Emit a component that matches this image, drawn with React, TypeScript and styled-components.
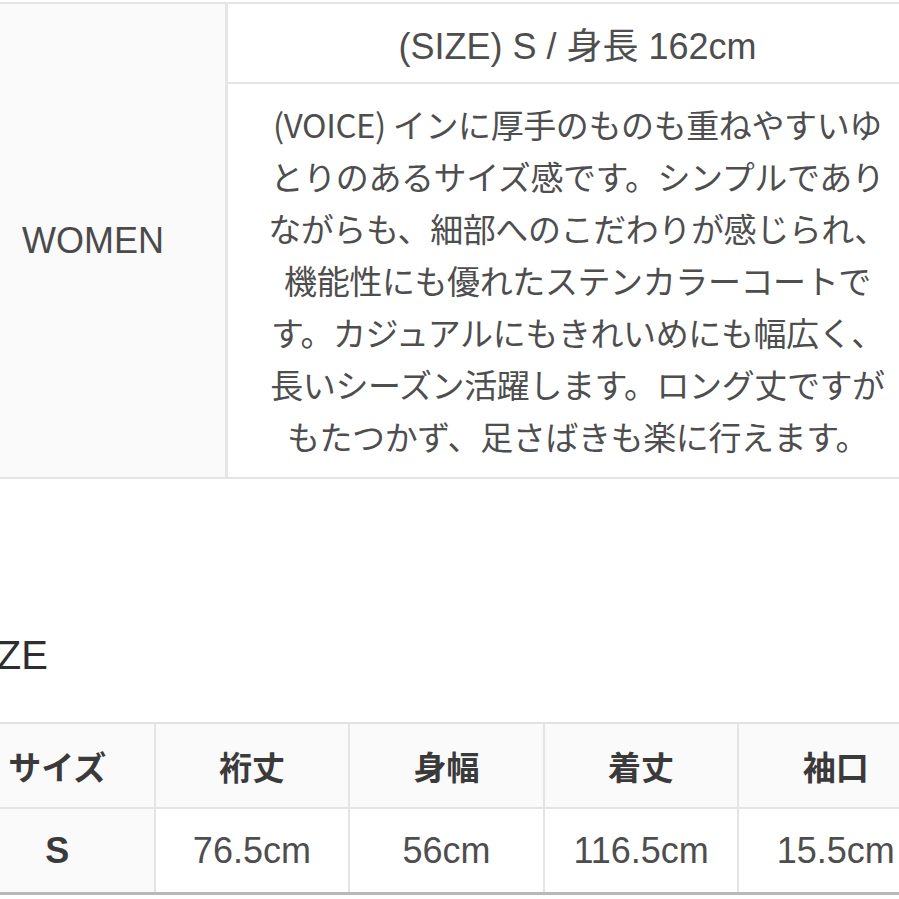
import React from 'react';
import styled, { createGlobalStyle } from 'styled-components';

const GlobalStyle = createGlobalStyle`
  html, body {
    margin: 0;
    padding: 0;
    background: #ffffff;
    overflow: hidden;
  }
  body {
    font-family: 'Liberation Sans', 'Noto Sans CJK JP', sans-serif;
    color: #4a4a4a;
  }
`;

const voiceLines = [
  '(VOICE) インに厚手のものも重ねやすいゆ',
  'とりのあるサイズ感です。シンプルであり',
  'ながらも、細部へのこだわりが感じられ、',
  '機能性にも優れたステンカラーコートで',
  'す。カジュアルにもきれいめにも幅広く、',
  '長いシーズン活躍します。ロング丈ですが',
  'もたつかず、足さばきも楽に行えます。',
];

const sizeHeads = ['サイズ', '裄丈', '身幅', '着丈', '袖口'];
const sizeRow = ['S', '76.5cm', '56cm', '116.5cm', '15.5cm'];

const App = () => {
  return (
    <Page>
      <GlobalStyle />
      <ModelTable>
        <tbody>
          <tr>
            <LabelCell rowSpan={2}>WOMEN</LabelCell>
            <SizeCell>(SIZE) S / 身長 162cm</SizeCell>
          </tr>
          <tr>
            <VoiceCell>
              {voiceLines.map((line, idx) => (
                <VoiceLine key={idx}>{line}</VoiceLine>
              ))}
            </VoiceCell>
          </tr>
        </tbody>
      </ModelTable>

      <Heading>SIZE</Heading>

      <SizeTable>
        <tbody>
          <tr>
            {sizeHeads.map((head) => (
              <HeadCell key={head}>{head}</HeadCell>
            ))}
          </tr>
          <tr>
            {sizeRow.map((value, idx) => (
              <ValueCell key={idx} $strong={idx === 0}>
                {value}
              </ValueCell>
            ))}
          </tr>
        </tbody>
      </SizeTable>
    </Page>
  );
};

export default App;

// 화면 왼쪽이 잘려 있는 스크린샷이라 페이지 전체를 왼쪽으로 당김
const Page = styled.div`
  width: 975px;
  margin-left: -41px;
  padding-top: 2px;
`;

// 모델 정보 표
const ModelTable = styled.table`
  width: 970px;
  border-collapse: collapse;
  border: 2px solid #e4e4e4;
`;

const LabelCell = styled.td`
  width: 264px;
  background: #fafafa;
  border-right: 3px solid #e6e6e6;
  text-align: center;
  vertical-align: middle;
  font-size: 36px;
  color: #4a4a4a;
  padding: 0;
`;

const SizeCell = styled.td`
  height: 78px;
  padding: 0;
  text-align: center;
  vertical-align: middle;
  font-size: 36px;
  color: #4e4e4e;
  border-bottom: 2px solid #e4e4e4;
`;

const VoiceCell = styled.td`
  padding: 14px 20px 15px;
  text-align: center;
  vertical-align: top;
`;

const VoiceLine = styled.div`
  font-family: 'Noto Sans CJK JP', 'Liberation Sans', sans-serif;
  font-size: 33px;
  line-height: 52px;
  letter-spacing: -0.4px;
  color: #4e4e4e;
  white-space: nowrap;
`;

// 사이즈 표
const Heading = styled.div`
  margin: 152px 0 43px;
  font-size: 40px;
  line-height: 48px;
  color: #2e2e2e;
`;

const SizeTable = styled.table`
  width: 975px;
  table-layout: fixed;
  border-collapse: collapse;
  border-top: 2px solid #e2e2e2;
  border-bottom: 3px solid #b9b9b9;
`;

const HeadCell = styled.td`
  height: 83px;
  padding: 0;
  background: #fafafa;
  border: 2px solid #e4e4e4;
  border-top: none;
  text-align: center;
  vertical-align: middle;
  font-family: 'Noto Sans CJK JP', 'Liberation Sans', sans-serif;
  font-size: 33px;
  font-weight: 700;
  color: #3a3a3a;
`;

const ValueCell = styled.td<{ $strong?: boolean }>`
  height: 83px;
  padding: 0;
  background: ${(p) => (p.$strong ? '#fafafa' : '#ffffff')};
  border: 2px solid #e4e4e4;
  border-bottom: none;
  text-align: center;
  vertical-align: middle;
  font-size: 36px;
  font-weight: ${(p) => (p.$strong ? 700 : 400)};
  color: ${(p) => (p.$strong ? '#3a3a3a' : '#4e4e4e')};
`;
